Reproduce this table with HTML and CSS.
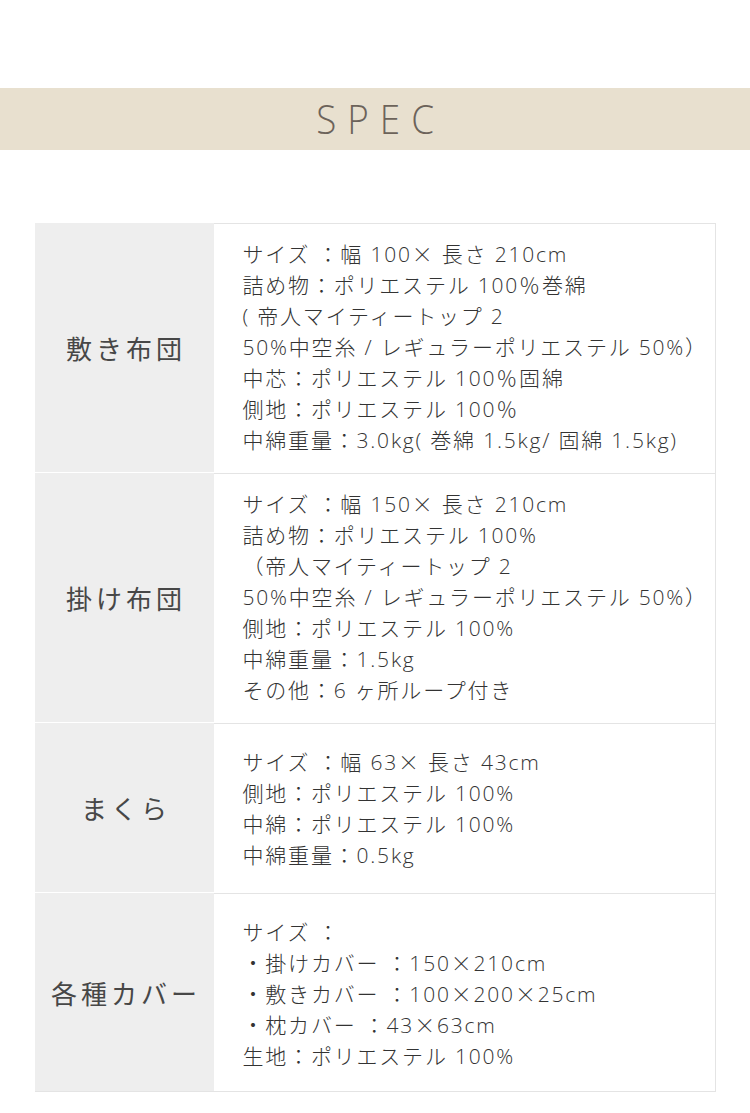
FILE: index.html
```html
<!DOCTYPE html>
<html lang="ja">
<head>
<meta charset="utf-8">
<title>SPEC</title>
<link rel="stylesheet" href="styles.css">
</head>
<body>
<header class="band"><h1 class="band-title">SPEC</h1></header>
<div class="spec">
  <div class="row">
    <div class="label">敷き布団</div>
    <div class="body body-a">サイズ ：幅 100<span class="x">×</span> 長さ 210cm<br>詰め物：ポリエステル 100％巻綿<br>( 帝人マイティートップ 2<br>50%中空糸 / レギュラーポリエステル 50%）<br>中芯：ポリエステル 100％固綿<br>側地：ポリエステル 100％<br>中綿重量：3.0kg( 巻綿 1.5kg/ 固綿 1.5kg)</div>
  </div>
  <div class="row">
    <div class="label">掛け布団</div>
    <div class="body body-a">サイズ ：幅 150<span class="x">×</span> 長さ 210cm<br>詰め物：ポリエステル 100%<br>（帝人マイティートップ 2<br>50%中空糸 / レギュラーポリエステル 50%）<br>側地：ポリエステル 100%<br>中綿重量：1.5kg<br>その他：6 ヶ所ループ付き</div>
  </div>
  <div class="row">
    <div class="label">まくら</div>
    <div class="body body-b">サイズ ：幅 63<span class="x">×</span> 長さ 43cm<br>側地：ポリエステル 100%<br>中綿：ポリエステル 100%<br>中綿重量：0.5kg</div>
  </div>
  <div class="row">
    <div class="label">各種カバー</div>
    <div class="body body-c">サイズ ：<br>・掛けカバー ：150<span class="x">×</span>210cm<br>・敷きカバー ：100<span class="x">×</span>200<span class="x">×</span>25cm<br>・枕カバー ：43<span class="x">×</span>63cm<br>生地：ポリエステル 100%</div>
  </div>
</div>
</body>
</html>
```
FILE: styles.css
```css
html, body {
  margin: 0;
  padding: 0;
  background: #ffffff;
}
body {
  font-family: "Noto Sans CJK JP", "Noto Sans", sans-serif;
  color: #333333;
}
.band {
  margin-top: 88px;
  height: 62px;
  background: #e8e0cf;
  display: flex;
  align-items: center;
  justify-content: center;
}
.band-title {
  margin: 0;
  font-family: "Open Sans", "Noto Sans", sans-serif;
  font-weight: 300;
  font-size: 40px;
  letter-spacing: 12px;
  padding-left: 12px;
  color: #6c635a;
  line-height: 1;
  transform: scaleX(0.92);
}
.spec {
  width: 680px;
  margin: 73px auto 0;
  border-right: 1px solid #e4e4e4;
}
.row {
  display: grid;
  grid-template-columns: 179px 1fr;
}
.label {
  background: #eeeeee;
  border-bottom: 1px solid #ffffff;
  display: flex;
  align-items: center;
  justify-content: center;
  font-size: 26px;
  font-weight: 400;
  letter-spacing: 4px;
  padding-left: 4px;
  color: #474747;
}
.row:last-child .label {
  border-bottom-color: #e4e4e4;
}
.body {
  border-top: 1px solid #e4e4e4;
  padding-left: 29px;
  font-family: "Open Sans", "Noto Sans CJK JP", sans-serif;
  font-size: 21px;
  font-weight: 300;
  letter-spacing: 1.8px;
  line-height: 31px;
  white-space: nowrap;
  text-spacing-trim: space-all;
}
.x {
  font-family: "Noto Sans CJK JP", sans-serif;
  line-height: 1;
}
.row:last-child .body {
  border-bottom: 1px solid #e4e4e4;
}
.body-a {
  padding-top: 15px;
  padding-bottom: 17px;
}
.body-b {
  padding-top: 23px;
  padding-bottom: 22px;
}
.body-c {
  padding-top: 23px;
  padding-bottom: 19px;
}
```
